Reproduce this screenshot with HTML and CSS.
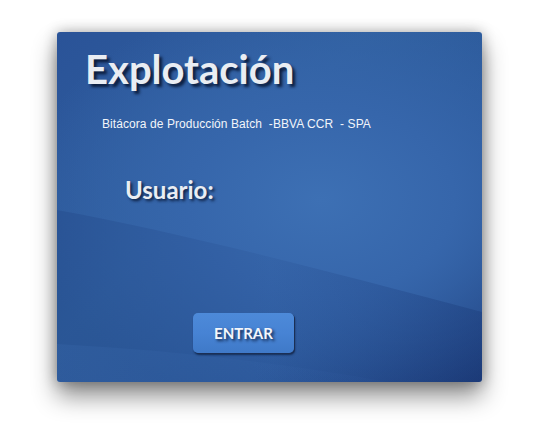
FILE: index.html
```html
<!DOCTYPE html>
<html lang="es">
<head>
<meta charset="utf-8">
<title>Explotación</title>
<link rel="stylesheet" href="styles.css">
</head>
<body>
<div class="panel">
  <svg class="waves" width="425" height="350" viewBox="0 0 425 350" aria-hidden="true">
    <defs>
      <linearGradient id="g1" x1="0" y1="0" x2="1" y2="0">
        <stop offset="0" stop-color="#1d3f80" stop-opacity="0.3"/>
        <stop offset="0.5" stop-color="#1d3f80" stop-opacity="0.12"/>
        <stop offset="1" stop-color="#1a3a78" stop-opacity="0.4"/>
      </linearGradient>
      <linearGradient id="g2" x1="0" y1="0" x2="1" y2="0">
        <stop offset="0" stop-color="#3c6cb0" stop-opacity="0.25"/>
        <stop offset="1" stop-color="#3c6cb0" stop-opacity="0.05"/>
      </linearGradient>
    </defs>
    <path d="M0 178 C 120 200, 260 236, 425 280 L425 350 L0 350 Z" fill="url(#g1)"/>
    <path d="M0 312 C 110 318, 220 330, 330 350 L0 350 Z" fill="url(#g2)"/>
  </svg>
  <div class="content">
    <h1 class="title">Explotación</h1>
    <p class="subtitle">Bitácora de Producción Batch  -BBVA CCR  - SPA</p>
    <div class="label">Usuario:</div>
    <button class="btn" type="button">ENTRAR</button>
  </div>
</div>
</body>
</html>
```

FILE: styles.css
```css
html, body {
  margin: 0;
  padding: 0;
  background: #ffffff;
}
body {
  width: 539px;
  height: 425px;
  overflow: hidden;
  display: flex;
  justify-content: center;
  align-items: flex-start;
  padding-top: 32px;
  box-sizing: border-box;
}
.panel {
  position: relative;
  width: 425px;
  height: 350px;
  border-radius: 3px;
  overflow: hidden;
  background:
    radial-gradient(ellipse 70% 60% at 62% 48%, #3d70b4 0%, #3666ab 45%, rgba(46,90,158,0) 100%),
    linear-gradient(135deg, #2a5398 0%, #30609f 40%, #2b589a 70%, #1d3b78 100%);
  box-shadow: 0 14px 24px rgba(0,0,0,0.45), 0 0 14px rgba(0,0,0,0.3);
}
.waves {
  position: absolute;
  left: 0;
  top: 0;
}
.content {
  position: relative;
  display: flex;
  flex-direction: column;
  align-items: flex-start;
}
.title {
  margin: 13px 0 0 28px;
  font-family: Lato, "Open Sans", sans-serif;
  font-weight: 700;
  font-size: 40px;
  line-height: 48px;
  color: #e9edf3;
  text-shadow: 3px 3px 3px rgba(5,18,45,0.85);
}
.subtitle {
  margin: 24px 0 0 45px;
  font-family: "Liberation Sans", Arial, sans-serif;
  font-size: 12px;
  line-height: 14px;
  letter-spacing: 0.07px;
  color: #f2f5fa;
  white-space: pre;
}
.label {
  margin: 45px 0 0 68px;
  font-family: Lato, "Open Sans", sans-serif;
  font-weight: 700;
  font-size: 24px;
  line-height: 28px;
  color: #e9edf3;
  text-shadow: 2px 2px 3px rgba(5,18,45,0.85);
}
.btn {
  margin: 109px 0 0 136px;
  width: 101px;
  height: 40px;
  border: none;
  border-radius: 5px;
  background: linear-gradient(180deg, #4d8ad9 0%, #4783d4 50%, #3f79c8 100%);
  box-shadow: 1px 1px 0 #1b2f55, 1px 2px 2px rgba(10,25,55,0.7);
  font-family: Lato, "Open Sans", sans-serif;
  font-weight: 700;
  font-size: 15px;
  color: #f3f6fb;
  text-shadow: 2px 2px 3px rgba(5,18,45,0.8);
  padding: 0;
  cursor: pointer;
}
```
